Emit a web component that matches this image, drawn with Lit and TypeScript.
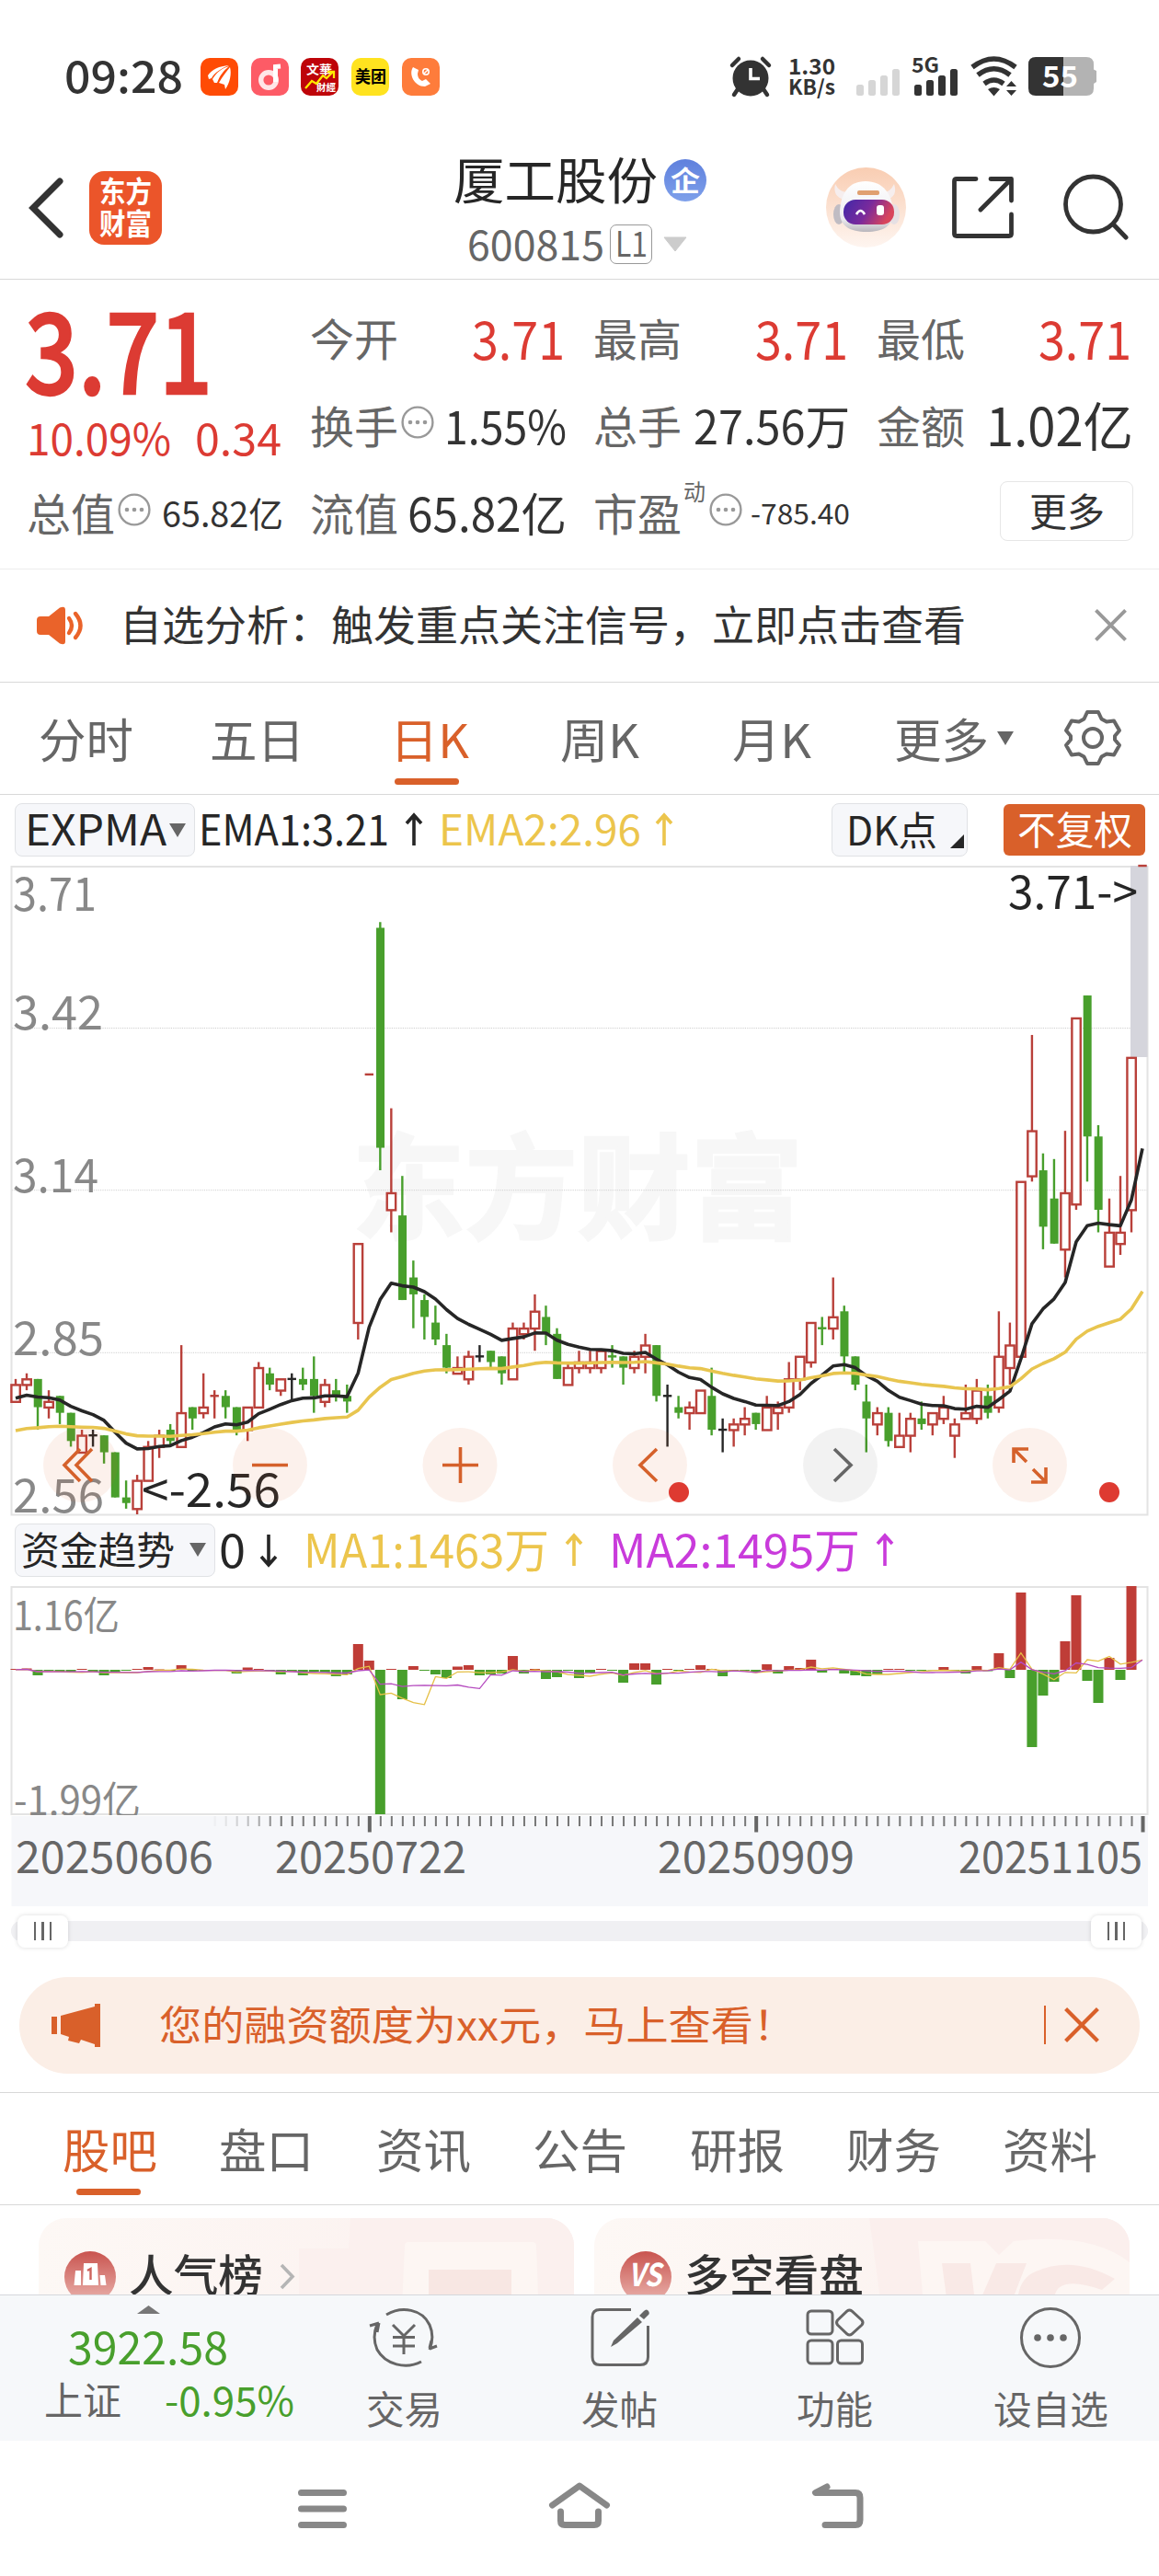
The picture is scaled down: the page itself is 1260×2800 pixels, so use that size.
import { LitElement, html, svg, css } from "lit";
import { customElement } from "lit/decorators.js";

const FONT = css`"Noto Sans CJK SC", "Noto Sans", sans-serif`;

/* One line of text set to an exact advance width; the box is one em high. */
const fit = (text: string, width: number, size: number, cls = "") => html`<svg
  class="fit ${cls}" width=${width} height=${size}><text x="0" y=${size * 0.88} font-size=${size}
  textLength=${width} lengthAdjust="spacingAndGlyphs">${text}</text></svg>`;

/* The same, placed by its baseline inside a chart. */
const label = (text: string, x: number, y: number, width: number, size: number, cls = "") =>
  svg`<text class=${cls} x=${x} y=${y} font-size=${size} textLength=${width} lengthAdjust="spacingAndGlyphs">${text}</text>`;

const shared = css`
  * { box-sizing: border-box; }
  svg { display: block; flex: none; overflow: visible; }
  text { font-family: ${FONT}; fill: currentColor; }
`;

/* Daily candles as [open, close, high, low], in fen above 2.56. */
const DAYS: number[][] = [
  [20,23,24,20],[23,24,25,22],[24,19,24,15],[19,20,22,17],[21,18,21,16],[18,13,18,12],[11,14,15,11],[14,14,15,12],
  [14,11,14,9],[11,3,11,3],[3,2,6,1],[1,6,7,0],[6,12,13,6],[12,14,15,10],[15,13,16,12],[12,18,30,12],
  [19,17,19,15],[18,19,25,17],[21,21,22,17],[21,19,22,17],[19,15,19,14],[15,19,19,13],[19,26,27,19],[25,23,26,22],
  [22,24,24,21],[24,24,25,20],[24,23,26,22],[24,21,28,18],[20,23,24,19],[22,21,24,20],[21,20,23,18],[34,48,48,31],
  [78,78,78,78],[104,65,105,61],[54,57,72,50],[53,38,60,38],[42,39,45,33],[38,35,39,31],[34,31,37,30],[30,26,32,25],
  [25,26,28,25],[24,28,29,23],[28,28,30,27],[29,27,29,26],[28,25,28,23],[24,33,34,24],[32,33,34,31],[33,36,39,29],
  [35,32,37,30],[32,24,33,24],[23,26,27,23],[26,27,29,25],[26,27,29,25],[26,29,29,25],[28,28,30,26],[28,26,28,23],
  [26,28,29,25],[28,30,32,25],[30,21,30,20],[21,21,23,12],[19,18,21,17],[18,19,20,15],[18,22,22,18],[21,15,26,14],
  [15,15,17,11],[15,16,17,12],[16,17,19,14],[18,16,18,15],[15,19,21,15],[18,19,20,15],[19,24,27,18],[24,28,28,22],
  [27,34,34,26],[33,33,35,30],[33,35,42,31],[36,28,37,25],[28,23,28,22],[20,17,23,11],[16,18,19,14],[18,13,19,12],
  [12,14,18,12],[14,17,18,11],[17,16,20,15],[16,18,18,14],[17,19,21,16],[14,16,17,10],[17,18,23,17],[17,22,24,16],
  [21,18,23,17],[19,28,36,18],[26,30,34,23],[28,59,59,28],[60,68,85,59],[61,51,64,47],[56,48,63,48],[47,57,68,42],
  [55,88,88,54],[92,67,92,59],[67,54,69,50],[44,50,56,44],[48,50,60,46],[54,81,81,50],[115,115,115,115],
];
const RED_CROSS = new Set([18, 32, 102]);
const GREEN_CROSS = new Set([54, 73]);

/* Net capital flow per day, in plot pixels from the zero line. */
const FLOW = [
  1,1.5,-6,-1,-2,-2,1,-3,-6,-2,-1,1,3,0.5,-1,5,-1,-1,-1,-1,-4,2.5,1,-1,-5,-2,-6,-2,-3,-7,-5,28,
  10,-157,1,-32,4,-1,-5,-9,3.5,5,-6,-5,-4,15,-4,1,-10,-8,-1,-9,-3,1,-1,-14,7,7,-16,1,-1,1,5,1,
  -7,-1,-1,-3,6,-4,4,2,11,-3,1,-4,-6,-7,-5,1,1,-1,-1,-0.5,3,-1,-4,4,-1.5,18,-9,84,-84,-28,-13,31,
  81,-12,-36,13,-11,91,0,
];

const px = (i: number) => 17 + 12.01 * i;
const py = (n: number) => 705 - n * 6.13;
const closes = DAYS.map((d) => d[1]);

function ema(period: number, seed: number): number[] {
  const k = 2 / (period + 1);
  let v = seed;
  return closes.map((c, i) => (i === 0 ? v : (v += (c - v) * k)));
}
function sma(values: number[], period: number): number[] {
  return values.map((_, i) => {
    const part = values.slice(Math.max(0, i - period + 1), i + 1);
    return part.reduce((a, b) => a + b, 0) / part.length;
  });
}
const line = (values: number[], y: (v: number) => number) =>
  values.map((v, i) => `${px(i).toFixed(1)},${y(v).toFixed(1)}`).join(" ");

@customElement("kline-chart")
class KlineChart extends LitElement {
  static styles = [shared, css`
    :host { display: block; }
    .frame { fill: none; stroke: #e3e3e3; stroke-width: 2; }
    .grid { stroke: #cfcfcf; stroke-width: 1; stroke-dasharray: 1.2 1.2; }
    .mark { fill: #f7f7f7; stroke: #f7f7f7; stroke-width: 3; font-weight: 700; }
    .price { fill: #888; }
    .tag { fill: #262626; }
    .up { fill: #fff; stroke: #b9403a; stroke-width: 2.4; }
    .upline { stroke: #b9403a; stroke-width: 2.4; }
    .down { fill: #489f2c; }
    .downline { stroke: #489f2c; stroke-width: 2.4; }
    .flatline { stroke: #262626; stroke-width: 2.4; }
    .ma { fill: none; stroke-width: 3.6; stroke-linejoin: round; }
    .ma1 { stroke: #262626; }
    .ma2 { stroke: #e8c54f; }
    .disc { fill: #d9602a; fill-opacity: .09; }
    .disc.off { fill: #000; fill-opacity: .05; }
    .glyph { fill: none; stroke: #d5612b; stroke-width: 3.6; }
    .glyph.off { stroke: #666; }
    .dot { fill: #de3a31; }
  `];

  candle(d: number[], i: number) {
    const [o, c, hi, lo] = d;
    const x = px(i);
    if (o === c) {
      const kind = RED_CROSS.has(i) ? "upline" : GREEN_CROSS.has(i) ? "downline" : "flatline";
      return svg`<g class=${kind}>
        <line x1=${x - 4.7} x2=${x + 4.7} y1=${py(c)} y2=${py(c)} />
        <line x1=${x} x2=${x} y1=${py(hi)} y2=${py(lo)} /></g>`;
    }
    const top = py(Math.max(o, c));
    const bottom = py(Math.min(o, c));
    return c > o
      ? svg`<line class="upline" x1=${x} x2=${x} y1=${py(hi)} y2=${top} />
          <line class="upline" x1=${x} x2=${x} y1=${bottom} y2=${py(lo)} />
          <rect class="up" x=${x - 4.6} y=${top + 0.4} width="9.4" height=${bottom - top} />`
      : svg`<line class="downline" x1=${x} x2=${x} y1=${py(hi)} y2=${py(lo)} />
          <rect class="down" x=${x - 4.3} y=${top} width="9" height=${bottom - top} />`;
  }

  render() {
    return html`<svg width="1260" height="705" viewBox="0 0 1260 705">
      ${label("东方财富", 383, 396, 490, 124, "mark")}
      ${[176.5, 352.7, 529.3].map((y) => svg`<line class="grid" x1="13" x2="1247" y1=${y} y2=${y} />`)}
      <rect class="frame" x="12.5" y="1" width="1235" height="704.5" />
      <rect x="1229" y="0" width="18.5" height="208" fill="#d5d5dc" />
      ${label("3.71", 14, 49, 91, 51, "price")}
      ${label("3.42", 14, 178, 98, 51, "price")}
      ${label("3.14", 14, 355, 93, 51, "price")}
      ${label("2.85", 14, 532, 99, 51, "price")}
      ${label("2.56", 14, 703, 99, 51, "price")}
      ${DAYS.map((d, i) => this.candle(d, i))}
      <polyline class="ma ma1" points=${line(ema(12, 20.6), py)} />
      <polyline class="ma ma2" points=${line(ema(50, 14.85), py)} />
      ${label("3.71->", 1096, 47, 141, 51, "tag")}
      ${label("<-2.56", 154, 697, 151, 51, "tag")}
      ${[87.5, 293.5, 500, 706.5, 913.5, 1119.5].map((x, i) =>
        svg`<circle class="disc ${i === 4 ? "off" : ""}" cx=${x} cy="651.5" r="40.5" />`)}
      <path class="glyph" d="M87 634 70 651.5 87 669M100 634 83 651.5 100 669" />
      <path class="glyph" d="M274 651.5h39" />
      <path class="glyph" d="M481 651.5h39M500.5 632v39" />
      <path class="glyph" d="M714 634 696 651.5 714 669" />
      <path class="glyph off" d="M907 634 925 651.5 907 669" />
      <path class="glyph" d="M1102 649V634H1118M1102 634 1116 648M1123 656 1137 670M1137 654V670H1121" />
      <circle class="dot" cx="738" cy="681" r="11" />
      <circle class="dot" cx="1206" cy="681" r="11" />
    </svg>`;
  }
}

@customElement("flow-chart")
class FlowChart extends LitElement {
  static styles = [shared, css`
    :host { display: block; }
    .frame { fill: none; stroke: #e3e3e3; stroke-width: 2; }
    .in { fill: #bf3d37; }
    .out { fill: #489f2c; }
    .avg { fill: none; stroke-width: 1.3; }
    .avg1 { stroke: #e5bf45; }
    .avg2 { stroke: #b54bbf; }
    .amount { fill: #888; }
    .axis { fill: #f6f7fa; }
    .tick { stroke: #777; stroke-width: 2; }
    .major { stroke: #666; stroke-width: 4; }
    .date { fill: #666; }
    .clip { overflow: hidden; }
  `];

  render() {
    const zero = 91;
    return html`
      <svg class="clip" width="1260" height="249" viewBox="0 0 1260 249">
        <rect class="frame" x="12.5" y="1" width="1235" height="247" />
        ${label("1.16亿", 14, 48, 116, 43, "amount")}
        ${label("-1.99亿", 15, 249, 138, 43, "amount")}
        ${FLOW.map((v, i) => svg`<rect class=${v > 0 ? "in" : "out"} x=${px(i) - 5.5} width="11"
          y=${v > 0 ? zero - v : zero} height=${Math.abs(v)} />`)}
        <polyline class="avg avg1" points=${line(sma(FLOW, 5), (v) => zero + 0.8 - v)} />
        <polyline class="avg avg2" points=${line(sma(FLOW, 10), (v) => zero + 0.8 - v)} />
      </svg>
      <svg width="1260" height="99" viewBox="0 0 1260 99">
        <rect class="axis" x="12.5" y="1" width="1235.5" height="98" />
        ${DAYS.map((_, i) => i < 18 ? null : svg`<line class=${[32, 67, 102].includes(i) ? "major" : "tick"}
          x1=${px(i) + 0.5} x2=${px(i) + 0.5} y1="1" y2=${[32, 67, 102].includes(i) ? 18.5 : 12}
          opacity=${Math.min(1, Math.pow((i - 17) / 7, 1.5))} />`)}
        ${label("20250606", 17, 62.5, 215, 47, "date")}
        ${label("20250722", 299, 62.5, 208, 47, "date")}
        ${label("20250909", 715, 62.5, 214, 47, "date")}
        ${label("20251105", 1042, 62.5, 200, 47, "date")}
      </svg>`;
  }
}

const infoDots = html`<svg class="dots" width="36" height="36" viewBox="0 0 36 36">
  <circle cx="18" cy="18" r="16.4" fill="none" stroke="#999" stroke-width="2.4" />
  <circle cx="10" cy="18" r="2.3" fill="#999" /><circle cx="18" cy="18" r="2.3" fill="#999" />
  <circle cx="26" cy="18" r="2.3" fill="#999" /></svg>`;

const arrow = (down = false) => html`<svg width="18" height="34" viewBox="0 0 18 34">
  <path d=${down ? "M9 0V33M1 24 9 33 17 24" : "M9 34V1M1 10 9 1 17 10"} fill="none"
    stroke="currentColor" stroke-width="3.6" /></svg>`;

const caret = html`<svg class="caret" width="18" height="15" viewBox="0 0 18 15">
  <path d="M0 0H18L9 15Z" fill="#666" /></svg>`;

@customElement("app-root")
class AppRoot extends LitElement {
  static styles = [shared, css`
    :host { display: block; width: 1260px; height: 2800px; overflow: hidden; background: #fff; color: #262626; }
    .page { display: flex; flex-direction: column; width: 1260px; height: 2800px; background: #fff; }
    .row { display: flex; align-items: center; }
    .semi { font-weight: 500; }
    .bold { font-weight: 700; }
    .red { color: #dc3b33; }

    .status { height: 166px; padding-left: 70px; color: #333; flex: none; }
    .apps { display: flex; gap: 13.7px; margin-left: 19px; }
    .app { display: flex; align-items: center; justify-content: center; width: 41px; height: 41px; border-radius: 10px; overflow: hidden; }
    .a1 { background: #ff4b05; }
    .a2 { background: #fd5b66; }
    .a3 { background: #be0409; }
    .a4 { background: #ffe31f; color: #000; }
    .a5 { background: #fe7c3b; }
    .alarm { margin-left: 316px; }
    .speed { display: flex; flex-direction: column; gap: 0; margin-left: 19px; width: 51px; }
    .signals { margin-left: 22px; }

    .header { height: 138px; padding: 0 0 18px 31px; border-bottom: 1.5px solid #d8d8d8; flex: none; }
    .logo { display: flex; flex-direction: column; align-items: center; justify-content: center; width: 79px; height: 80px; margin-left: 28px; border-radius: 16px; background: #eb552a; color: #fff; gap: 3px; }
    .name { display: flex; flex-direction: column; width: 280px; margin-left: 317px; gap: 20px; padding-top: 5px; }
    .qi { display: flex; align-items: center; justify-content: center; width: 46px; height: 46px; border-radius: 50%; margin-left: 7px; background: linear-gradient(#5f80dd, #7ea0ea); color: #fff; }
    .code { color: #666; padding-left: 15px; height: 44px; }
    .level { display: flex; align-items: center; justify-content: center; width: 46px; height: 43px; margin-left: 6px; border: 1.5px solid #999; border-radius: 7px; }
    .drop { margin-left: 12px; }
    .robot { margin-left: 125px; }
    .share { margin-left: 49px; }
    .search { margin-left: 52px; }

    .quote { display: grid; grid-template-columns: repeat(4, 277px); grid-template-rows: repeat(3, 95px); column-gap: 31px; height: 314.5px; padding: 17px 0 0 29px; border-bottom: 1.5px solid #ededed; flex: none; color: #333; }
    .last { display: flex; flex-direction: column; grid-row: span 2; }
    .last .big { margin: 1px 0 0 -2px; }
    .last .big svg { stroke: currentColor; stroke-width: 2.4px; }
    .change { display: flex; justify-content: space-between; margin-top: 10px; }
    .cell { display: flex; align-items: center; justify-content: space-between; }
    .cell > .fit:last-child { margin-right: -2px; }
    .key { display: flex; align-items: center; color: #666; }
    .key .dots { margin: -10px 0 0 3px; }
    .pe { margin: -48px 0 0 2px; }
    .key .pe + .dots { margin-left: 4px; }
    .more { display: flex; align-items: center; justify-content: center; width: 145px; height: 65px; margin: -6px -2px 0 auto; border: 1.5px solid #e6e6e6; border-radius: 8px; }

    .notice { height: 123px; padding: 0 35px 0 39px; border-bottom: 1.5px solid #d8d8d8; color: #333; flex: none; }
    .notice .fit { margin-left: 39px; }
    .notice .close { margin-left: auto; }

    .periods { display: grid; grid-template-columns: 186px 196px 185px 187px 176px 185px auto; height: 122px; padding: 0 0 0 42px; border-bottom: 1.5px solid #d8d8d8; color: #666; flex: none; }
    .period { display: flex; align-items: center; position: relative; height: 126px; }
    .period.on, .tab.on { color: #d9602a; }
    .period.on::after { content: ""; position: absolute; left: 5px; bottom: 15px; width: 70px; height: 7px; border-radius: 4px; background: #d9602a; }
    .period .caret { margin: -5px 0 0 9px; }
    .gear { margin-top: -5px; }

    .indicators { height: 77.5px; padding-left: 16px; flex: none; }
    .chip { display: flex; align-items: center; height: 58px; background: #f6f7fa; border: 1.5px solid #e0e2e5; border-radius: 8px; }
    .expma { width: 196px; padding-left: 10px; }
    .expma .caret { margin-left: 3px; }
    .ema { margin-left: 4px; gap: 18px; }
    .ema.two { margin-left: 18px; gap: 16px; }
    .yellow { color: #ecc54c; }
    .purple { color: #c93bdb; }
    .dk { width: 148px; margin-left: 173px; padding-left: 15px; }
    .dk .corner { margin: 25px 0 0 14px; }
    .adjust { display: flex; align-items: center; justify-content: center; width: 154px; height: 56px; margin-left: 39px; border-radius: 6px; background: #d9602a; color: #fff; }
    .trend { width: 218px; padding-left: 6px; }
    .trend .caret { margin-left: 16px; }
    .zero { margin-left: 4px; gap: 16px; }
    .ma { margin-left: 29px; gap: 18px; }
    .ma.second { margin-left: 29px; }

    .slider { display: flex; align-items: center; height: 77px; padding: 0 12px 23px; flex: none; }
    .track { display: flex; align-items: center; justify-content: space-between; width: 1236px; height: 22px; margin-top: 1px; padding: 0 7px; border-radius: 11px; background: #f0f0f3; }
    .thumb { display: flex; align-items: center; justify-content: center; gap: 6px; width: 55px; height: 35px; border-radius: 8px; background: #fff; box-shadow: 0 0 5px rgba(0,0,0,.14); }
    .thumb i { width: 2.6px; height: 20px; background: #666; }

    .promo { height: 105px; margin: 0 21px; padding-left: 34px; border-radius: 53px; background: #fbeee6; color: #d9602a; flex: none; }
    .promo .fit { margin-left: 64px; }
    .bar { width: 1.5px; height: 42px; margin-left: 270px; background: #d9602a; }
    .promo .close { margin-left: 20px; }

    .tabs { display: grid; grid-template-columns: repeat(7, 170.4px); height: 123px; margin-top: 20px; padding-left: 68px; border-top: 1.5px solid #d8d8d8; border-bottom: 1.5px solid #d8d8d8; color: #666; flex: none; }
    .tab { display: flex; align-items: center; position: relative; height: 126px; }
    .tab.on::after { content: ""; position: absolute; left: 15px; bottom: 15px; width: 70px; height: 7px; border-radius: 4px; background: #d9602a; }

    .cards { display: flex; gap: 22px; height: 97px; padding: 14px 0 0 42px; overflow: hidden; flex: none; }
    .card { display: flex; position: relative; width: 582px; height: 140px; padding: 36px 0 0 28px; border-radius: 30px; overflow: hidden; background: linear-gradient(90deg, #fdf8f5, #fbf0ee); color: #333; }
    .card .art { position: absolute; left: 0; top: 0; }
    .card .badge { position: relative; }
    .card .fit { position: relative; margin: 2px 0 0 14px; }
    .card .chev { position: relative; margin: 13px 0 0 18px; }

    .dock { display: flex; height: 159px; background: #f6f8fa; border-top: 1.5px solid #d5d8dc; color: #666; flex: none; }
    .index { width: 322px; color: #489f2c; }
    .index .peak { margin: 11px 0 0 149px; }
    .index .value { margin: 12px 0 0 74px; }
    .index .foot { display: flex; align-items: center; justify-content: space-between; width: 272px; margin: 11px 0 0 48px; }
    .index .grey { color: #666; }
    .action { display: flex; flex-direction: column; align-items: center; width: 234.4px; padding-top: 13px; gap: 24px; }
    .nav { height: 148px; flex: none; }
    .sys { display: flex; align-items: flex-start; padding: 43px 0 0 324px; }
    .sys .home { margin-left: 219px; }
    .sys .back { margin-left: 218px; }
  `];

  status() {
    return html`<div class="row status">
      ${fit("09:28", 129, 48, "semi")}
      <div class="apps">
        <div class="app a1"><svg width="41" height="41" viewBox="0 0 41 41"><path fill="#fff" d="M8 19C13 12 20 9 31 8 23 11 15 16 12 22L9 23ZM13 23C17 16 23 11 31 9 25 14 21 19 18 27L15 27ZM20 27C24 20 28 15 32 10 34 17 32 27 27 34L26 29Z" /></svg></div>
        <div class="app a2"><svg width="41" height="41" viewBox="0 0 41 41"><circle cx="19" cy="24" r="8.3" fill="none" stroke="#fff" stroke-width="5.4" stroke-opacity=".85" /><path d="M26.5 26V9.5L32 9" fill="none" stroke="#fff" stroke-width="5" /></svg></div>
        <div class="app a3"><svg width="41" height="41" viewBox="0 0 41 41" color="#fff">
          ${label("文華", 6, 17, 28, 13, "bold")}${label("財經", 17, 36, 21, 10.5, "bold")}
          <path d="M5 33 12 25 17 28 24 19 28 22 35 15M29 15H36V22" fill="none" stroke="#ffe900" stroke-width="2.3" /></svg></div>
        <div class="app a4">${fit("美团", 34, 18, "bold")}</div>
        <div class="app a5"><svg width="41" height="41" viewBox="0 0 41 41"><path d="M12 10 C7 17 13 31 25 31 L31 28 26 23 22 25C18 23 17 20 17 17L18 13Z" fill="#fff" /><circle cx="26" cy="15" r="3.2" fill="none" stroke="#fff" stroke-width="1.6" /><path d="M24 17 28 13" stroke="#fff" stroke-width="1.4" /></svg></div>
      </div>
      <svg class="alarm" width="44" height="43" viewBox="0 0 44 43"><circle cx="22" cy="23" r="19.5" fill="#333" /><path d="M8 35 4 41M36 35 40 41M2 9 9 2M42 9 35 2" stroke="#333" stroke-width="4.5" stroke-linecap="round" /><path d="M22 12V23.5H32" fill="none" stroke="#fff" stroke-width="3.6" /></svg>
      <div class="speed">${fit("1.30", 51, 23, "bold")}${fit("KB/s", 51, 22, "bold")}</div>
      <svg class="signals" width="262" height="43" viewBox="928 62 262 43">
        <g fill="#d6d6d6"><rect x="929" y="92" width="8" height="12" rx="2.5" /><rect x="942" y="87" width="8" height="17" rx="2.5" /><rect x="955" y="82" width="8" height="22" rx="2.5" /><rect x="968" y="75" width="8" height="29" rx="2.5" /></g>
        <g fill="#333"><rect x="992" y="92" width="8" height="12" rx="2.5" /><rect x="1005" y="87" width="8" height="17" rx="2.5" /><rect x="1018" y="82" width="8" height="22" rx="2.5" /><rect x="1031" y="75" width="8" height="29" rx="2.5" /></g>
        ${label("5G", 989, 79, 30, 22, "bold")}
        <g fill="none" stroke="#333" stroke-width="5.5"><path d="M1055 73Q1078.500 55 1102 73M1061 81.500Q1078.500 68 1096 81.500M1068 91Q1078.500 83 1089 91" /></g>
        <path d="M1072 97Q1078.500 93 1085 97L1078.500 104.500ZM1092 94 1097.500 88 1103 94ZM1092 98 1097.500 104 1103 98Z" fill="#333" />
        <path d="M1154 62H1179Q1187 62 1187 70V75.500L1190 77V89L1187 91V96Q1187 104 1179 104H1154Z" fill="#b3b3b3" />
        <path d="M1154 62H1124Q1116 62 1116 70V96Q1116 104 1124 104H1154Z" fill="#333" />
        <g color="#fff">${label("55", 1131, 95, 39, 32, "bold")}</g>
      </svg>
    </div>`;
  }

  header() {
    return html`<div class="row header">
      <svg width="38" height="66" viewBox="0 0 38 66"><path d="M34 4 5 33 34 62" fill="none" stroke="#333" stroke-width="7" stroke-linecap="round" /></svg>
      <div class="logo">${fit("东方", 57, 32, "bold")}${fit("财富", 57, 32, "bold")}</div>
      <div class="name">
        <div class="row">${fit("厦工股份", 222, 54)}<span class="qi">${fit("企", 32, 30, "bold")}</span></div>
        <div class="row code">${fit("600815", 149, 45)}<span class="level">${fit("L1", 35, 38)}</span>
          <svg class="drop" width="26" height="17" viewBox="0 0 26 17"><path d="M1 1H25L13 16Z" fill="#ccc" stroke="#ccc" stroke-linejoin="round" /></svg></div>
      </div>
      <svg class="robot" width="87" height="87" viewBox="0 0 87 87">
        <defs>
          <linearGradient id="halo" x2="0" y2="1"><stop stop-color="#f9cdb2" /><stop offset="1" stop-color="#fef5f0" /></linearGradient>
          <linearGradient id="visor" y2=".3"><stop stop-color="#4028a8" /><stop offset=".55" stop-color="#7a2a9c" /><stop offset="1" stop-color="#d8455c" /></linearGradient>
          <linearGradient id="shell" x2="0" y2="1"><stop stop-color="#fff" /><stop offset=".75" stop-color="#ececf0" /><stop offset="1" stop-color="#b9b6bc" /></linearGradient>
        </defs>
        <circle cx="43.500" cy="43.500" r="43.500" fill="url(#halo)" />
        <path d="M10 18C8 27 11 33 20 35L25 27C17 27 13 24 10 18ZM74 18C77 27 74 33 66 35L61 27C68 27 71 24 74 18Z" fill="#f6eeee" />
        <ellipse cx="14" cy="51" rx="6" ry="11" fill="#c0bcc3" /><ellipse cx="74" cy="51" rx="6" ry="11" fill="#e6e0e4" />
        <path d="M43 15C24 15 16 29 15 48 15 64 26 70 44 70S73 64 73 48C72 29 62 15 43 15Z" fill="url(#shell)" />
        <rect x="34" y="25" width="24" height="5" rx="2" fill="#e0a070" />
        <rect x="19" y="35" width="55" height="27" rx="13" fill="url(#visor)" />
        <path d="M33 51Q37.500 43 42 51" fill="none" stroke="#fff" stroke-width="2.600" />
        <rect x="55" y="41" width="8" height="11" rx="3" fill="#fff" />
      </svg>
      <svg class="share" width="70" height="69" viewBox="0 0 70 69"><path d="M27 3.500H6Q3.500 3.500 3.500 6V63Q3.500 65.500 6 65.500H63Q65.500 65.500 65.500 63V42M43 3.500H65.500V27M65 4 32 37" fill="none" stroke="#333" stroke-width="4.800" stroke-linecap="round" stroke-linejoin="round" /></svg>
      <svg class="search" width="71" height="71" viewBox="0 0 71 71"><circle cx="32.500" cy="32" r="30" fill="none" stroke="#333" stroke-width="4.800" /><path d="M54.500 54 68 68" stroke="#333" stroke-width="5" stroke-linecap="round" /></svg>
    </div>`;
  }

  quote() {
    return html`<div class="quote">
      <div class="last red">
        <div class="big">${fit("3.71", 204, 121, "semi")}</div>
        <div class="change">${fit("10.09%", 157, 48)}${fit("0.34", 94, 48)}</div>
      </div>
      <div class="cell"><span class="key">${fit("今开", 96, 48)}</span><span class="red">${fit("3.71", 101, 58)}</span></div>
      <div class="cell"><span class="key">${fit("最高", 96, 48)}</span><span class="red">${fit("3.71", 101, 58)}</span></div>
      <div class="cell"><span class="key">${fit("最低", 96, 48)}</span><span class="red">${fit("3.71", 101, 58)}</span></div>
      <div class="cell"><span class="key">${fit("换手", 96, 48)}${infoDots}</span>${fit("1.55%", 133, 51)}</div>
      <div class="cell"><span class="key">${fit("总手", 96, 48)}</span>${fit("27.56万", 170, 50)}</div>
      <div class="cell"><span class="key">${fit("金额", 96, 48)}</span>${fit("1.02亿", 160, 57)}</div>
      <div class="cell"><span class="key">${fit("总值", 96, 48)}${infoDots}</span>${fit("65.82亿", 132, 38)}</div>
      <div class="cell"><span class="key">${fit("流值", 96, 48)}</span>${fit("65.82亿", 173, 50)}</div>
      <div class="cell"><span class="key">${fit("市盈", 96, 48)}<span class="pe">${fit("动", 24, 25)}</span>${infoDots}</span>${fit("-785.40", 108, 31)}</div>
      <div class="cell"><div class="more">${fit("更多", 82, 42)}</div></div>
    </div>`;
  }

  render() {
    const periods: [string, number][] = [["分时", 103], ["五日", 103], ["日K", 86], ["周K", 86], ["月K", 86]];
    const tabs = ["股吧", "盘口", "资讯", "公告", "研报", "财务", "资料"];
    const cross = (size: number, color: string, w: number) => html`<svg class="close" width=${size} height=${size} viewBox="0 0 36 36">
      <path d="M1.500 1.500 34.500 34.500M34.500 1.500 1.500 34.500" stroke=${color} stroke-width=${w} /></svg>`;
    return html`<div class="page">
      ${this.status()} ${this.header()} ${this.quote()}

      <div class="row notice">
        <svg width="52" height="42" viewBox="0 0 52 42"><path d="M1 15Q1 11 5 11H14L26 1.500Q32-1 32 4V38Q32 43 26 40.500L14 31H5Q1 31 1 27Z" fill="#ea632a" /><path d="M36 13Q42 21 36 29M43 8Q54 21 43 34" fill="none" stroke="#ea632a" stroke-width="4.400" stroke-linecap="round" /></svg>
        ${fit("自选分析：触发重点关注信号，立即点击查看", 920, 45)}
        ${cross(35, "#999", 4)}
      </div>

      <div class="periods">
        ${periods.map(([t, w], i) => html`<div class="period ${i === 2 ? "on" : ""}">${fit(t, w, 51)}</div>`)}
        <div class="period">${fit("更多", 103, 51)}${caret}</div>
        <div class="period"><svg class="gear" width="62" height="62" viewBox="0 0 62 62" fill="none" stroke="#666" stroke-width="4">
          <path stroke-linejoin="round" d="M25 3H37L40.500 10.500 46 13.500 54 12.500 60 23 55 29V33L60 39 54 49.500 46 48.500 40.500 51.500 37 59H25L21.500 51.500 16 48.500 8 49.500 2 39 7 33V29L2 23 8 12.500 16 13.500 21.500 10.500Z" /><circle cx="31" cy="31" r="10" /></svg></div>
      </div>

      <div class="row indicators">
        <div class="chip expma">${fit("EXPMA", 154, 46)}${caret}</div>
        <div class="row ema">${fit("EMA1:3.21", 207, 46)}${arrow()}</div>
        <div class="row ema two yellow">${fit("EMA2:2.96", 220, 46)}${arrow()}</div>
        <div class="chip dk">${fit("DK点", 99, 43)}<svg class="corner" width="15" height="15" viewBox="0 0 15 15"><path d="M15 0V15H0Z" fill="#262626" /></svg></div>
        <div class="adjust">${fit("不复权", 125, 42)}</div>
      </div>
      <kline-chart></kline-chart>

      <div class="row indicators">
        <div class="chip trend">${fit("资金趋势", 167, 42)}${caret}</div>
        <div class="row zero">${fit("0", 29, 51)}${arrow(true)}</div>
        <div class="row ma yellow">${fit("MA1:1463万", 267, 50)}${arrow()}</div>
        <div class="row ma second purple">${fit("MA2:1495万", 273, 50)}${arrow()}</div>
      </div>
      <flow-chart></flow-chart>

      <div class="slider"><div class="track">
        <div class="thumb"><i></i><i></i><i></i></div><div class="thumb"><i></i><i></i><i></i></div>
      </div></div>

      <div class="row promo">
        <svg width="54" height="47" viewBox="0 0 54 47" fill="#d9602a"><path d="M1 14H7V33H1ZM11 13 48 3V0H54V47H48V44L33 39 31 43 19 40 20 36 11 33Z" /></svg>
        ${fit("您的融资额度为xx元，马上查看！", 692, 44)}
        <div class="bar"></div>${cross(38, "#d9602a", 4)}
      </div>

      <div class="tabs">${tabs.map((t, i) => html`<div class="tab ${i === 0 ? "on" : ""}">${fit(t, 103, 51)}</div>`)}</div>

      <div class="cards">
        <div class="card">
          <svg class="art" width="582" height="140" viewBox="0 0 582 140"><path d="M339 0H582V140H283V33H337Z" fill="#fbf0ee" /><path d="M398 30Q398 26 402 26H536Q541 26 541 30L545 140H393Z" fill="#fdf6f3" /><rect x="424" y="56" width="90" height="84" fill="#f8e7e3" /></svg>
          <svg class="badge" width="56" height="56" viewBox="0 0 56 56"><defs><linearGradient id="b1" x2="0" y2="1"><stop stop-color="#c9544f" /><stop offset="1" stop-color="#eab4ae" /></linearGradient></defs>
            <circle cx="28" cy="28" r="28" fill="url(#b1)" /><path d="M12 21H18V37H10.500ZM21 13H36L37 37H20ZM38.500 26H44L45.500 37H39.500Z" fill="#fff" /><path d="M25 21 28.500 19V31" fill="none" stroke="#cd625c" stroke-width="2.400" /></svg>
          ${fit("人气榜", 146, 48, "semi")}
          <svg class="chev" width="17" height="29" viewBox="0 0 17 29"><path d="M2 2 14 14.500 2 27" fill="none" stroke="#b5b5b5" stroke-width="3.600" /></svg>
        </div>
        <div class="card">
          <svg class="art" width="582" height="140" viewBox="0 0 582 140"><path d="M299 0H582V140H318Z" fill="#fbefed" /><path d="M352 25H425L440 40 456 25Q540 15 582 48V140H362Z" fill="#fdf6f3" /><path d="M378 49H409L415 100 437 49H470L435 140H390ZM480 58Q520 40 566 66L552 78Q500 60 500 90L460 90Q462 65 480 58Z" fill="#f9e9e6" /></svg>
          <svg class="badge" width="56" height="56" viewBox="0 0 56 56" color="#fff"><defs><linearGradient id="b2" x2="0" y2="1"><stop stop-color="#c9544f" /><stop offset="1" stop-color="#eab4ae" /></linearGradient></defs>
            <circle cx="28" cy="28" r="28" fill="url(#b2)" /><g font-style="italic">${label("VS", 9, 38, 36, 34, "bold")}</g></svg>
          ${fit("多空看盘", 195, 48, "semi")}
        </div>
      </div>

      <div class="dock">
        <div class="index">
          <svg class="peak" width="25" height="9" viewBox="0 0 25 9"><path d="M0 9 12.500 0 25 9Z" fill="#777" /></svg>
          <div class="value">${fit("3922.58", 174, 49)}</div>
          <div class="foot"><span class="grey">${fit("上证", 84, 42)}</span>${fit("-0.95%", 141, 44)}</div>
        </div>
        <div class="action">
          <svg width="76" height="66" viewBox="0 0 76 66" fill="none" stroke="#666" stroke-width="3"><path d="M19 8C36-2 58 2 66 19 70 28 70 36 66 46M66 45 74 42M66 44 68 36M57 59C40 68 18 62 9 46 5 37 5 28 9 18M11 17 1 20M11 17 9 27" /><path d="M26 19 38 31 50 19M38 31V51M26 32.500H50M26 42H50" /></svg>
          ${fit("交易", 83, 42)}</div>
        <div class="action">
          <svg width="66" height="66" viewBox="0 0 66 66" fill="none" stroke="#666" stroke-width="3"><path d="M45 2.500H11Q3 2.500 3 10.500V54Q3 62.500 11 62.500H55Q63.500 62.500 63.500 54V20" /><path d="M23 43 26 36 52 11 57 16 30 39ZM54 9 59 4Q62 1 64 4 66 7 63 9L59 13Z" fill="#666" stroke="none" /></svg>
          ${fit("发帖", 83, 42)}</div>
        <div class="action">
          <svg width="66" height="66" viewBox="0 0 66 66" fill="none" stroke="#666" stroke-width="3"><rect x="3" y="4" width="27" height="25" rx="4" /><rect x="3" y="36" width="27" height="25" rx="4" /><rect x="35.500" y="36" width="27" height="25" rx="4" /><path d="M46 4Q48.500 2 51 4L62 14Q64 16.500 62 19L51 29Q48.500 31 46 29L35.500 19Q33.500 16.500 35.500 14Z" /></svg>
          ${fit("功能", 83, 42)}</div>
        <div class="action">
          <svg width="66" height="66" viewBox="0 0 66 66"><circle cx="33" cy="33" r="31.500" fill="none" stroke="#666" stroke-width="3" /><g fill="#666"><circle cx="19" cy="33" r="3.800" /><circle cx="33" cy="33" r="3.800" /><circle cx="47" cy="33" r="3.800" /></g></svg>
          ${fit("设自选", 125, 42)}</div>
      </div>

      <div class="nav"><div class="sys">
        <svg width="53" height="52" viewBox="0 0 53 52"><path d="M3.500 13.500H49.500M3.500 31H49.500M3.500 48.500H49.500" stroke="#888" stroke-width="7" stroke-linecap="round" /></svg>
        <svg class="home" width="68" height="52" viewBox="0 0 68 52" fill="none" stroke="#888" stroke-width="7" stroke-linecap="round" stroke-linejoin="round"><path d="M4.500 27 34 6 63.500 27M13.500 34V44Q13.500 48.500 18 48.500H50Q54.500 48.500 54.500 44V34" /></svg>
        <svg class="back" width="58" height="52" viewBox="0 0 58 52" fill="none" stroke="#888" stroke-width="7" stroke-linecap="round" stroke-linejoin="round"><path d="M17 7 4.500 13.500H48Q53 13.500 53 19V43Q53 48.500 48 48.500H15" /></svg>
      </div></div>
    </div>`;
  }
}
